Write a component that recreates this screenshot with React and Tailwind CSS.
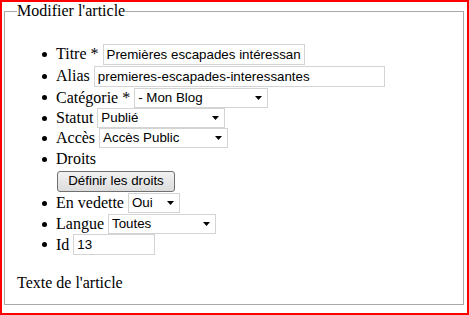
import React from 'react';

const Bullet = () => (
  <span className="w-[5px] h-[5px] rounded-full bg-black -ml-[14px] mr-[5px] shrink-0" />
);

const TextBox = ({ value, width }) => (
  <input
    readOnly
    value={value}
    style={{ width }}
    className="h-[21px] border border-[#d4d4d4] px-[3px] font-['Liberation_Sans',Arial,sans-serif] text-[13.33px] text-black bg-white outline-none"
  />
);

const FakeSelect = ({ value, width }) => (
  <div
    style={{ width }}
    className="h-[20px] border border-[#d4d4d4] bg-white flex items-center pl-[3px] pr-[5px] font-['Liberation_Sans',Arial,sans-serif] text-[13.33px] text-black"
  >
    <span className="flex-1 truncate">{value}</span>
    <svg width="7" height="4" viewBox="0 0 7 4" className="shrink-0">
      <path d="M0 0H7L3.5 4Z" fill="#000" />
    </svg>
  </div>
);

const Row = ({ label, height, children, bullet = true }) => (
  <li className="flex items-center gap-[4px]" style={{ height }}>
    {bullet && <Bullet />}
    {label && <span className="whitespace-nowrap">{label}</span>}
    {children}
  </li>
);

export default function App() {
  return (
    <div className="w-[469px] h-[315px] border-2 border-[#ff0000] bg-white font-['Liberation_Serif','Times_New_Roman',serif] text-[16px] text-black overflow-hidden">
      <fieldset className="ml-[2px] w-[460px] h-[303px] border border-[#a9a9a9] px-3">
        <legend className="leading-[18px]">Modifier l'article</legend>
        <ul className="mt-[23px] pl-[39px] leading-[18px]">
          <Row label="Titre *" height={22}>
            <TextBox value="Premières escapades intéressantes" width={202} />
          </Row>
          <Row label="Alias" height={22}>
            <TextBox value="premieres-escapades-interessantes" width={291} />
          </Row>
          <Row label="Catégorie *" height={21}>
            <FakeSelect value="- Mon Blog" width={134} />
          </Row>
          <Row label="Statut" height={20}>
            <FakeSelect value="Publié" width={128} />
          </Row>
          <Row label="Accès" height={20}>
            <FakeSelect value="Accès Public" width={129} />
          </Row>
          <Row label="Droits" height={22} />
          <Row bullet={false} height={22}>
            <button className="ml-[1px] h-[21px] w-[118px] rounded-[3px] border border-[#707070] bg-gradient-to-b from-[#f2f2f2] to-[#dcdcdc] font-['Liberation_Sans',Arial,sans-serif] text-[13.33px] text-black">
              Définir les droits
            </button>
          </Row>
          <Row label="En vedette" height={22}>
            <FakeSelect value="Oui" width={52} />
          </Row>
          <Row label="Langue" height={20}>
            <FakeSelect value="Toutes" width={108} />
          </Row>
          <Row label="Id" height={21}>
            <TextBox value="13" width={82} />
          </Row>
        </ul>
        <p className="mt-[19px] leading-[18px]">Texte de l'article</p>
      </fieldset>
    </div>
  );
}
